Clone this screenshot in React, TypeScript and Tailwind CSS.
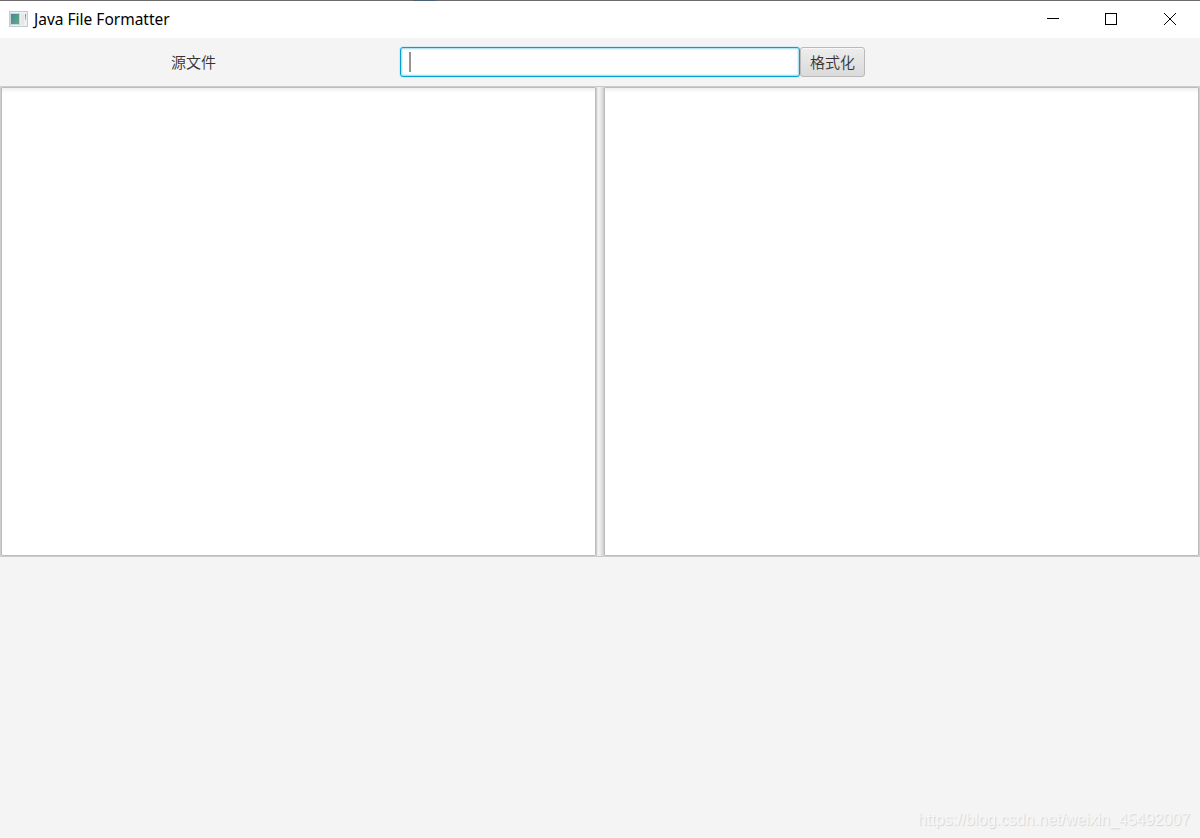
function AppIcon() {
  return (
    <svg width="19" height="16" viewBox="0 0 19 16" shapeRendering="crispEdges">
      <defs>
        <linearGradient id="screen" x1="0" y1="0" x2="1" y2="1">
          <stop offset="0" stopColor="#4a83a0" />
          <stop offset="1" stopColor="#5fb07c" />
        </linearGradient>
        <linearGradient id="strip" x1="0" y1="0" x2="0" y2="1">
          <stop offset="0" stopColor="#4b8f9c" />
          <stop offset="1" stopColor="#a5cdb4" />
        </linearGradient>
      </defs>
      <rect x="0" y="0" width="19" height="16" fill="#c6c9cd" />
      <rect x="1" y="1" width="17" height="14" fill="#eff0f2" />
      <rect x="1" y="2" width="10" height="12" fill="#c9d5da" />
      <rect x="2" y="3" width="8" height="10" fill="url(#screen)" />
      <rect x="12" y="3" width="3" height="11" fill="#e4e6ea" />
      <rect x="16" y="3" width="1" height="6" fill="url(#strip)" />
    </svg>
  );
}

function TitleBar() {
  return (
    <header className="flex h-[38px] flex-col bg-white">
      <div className="h-px shrink-0 bg-[#6b6b6b] pl-[413px]">
        <div className="h-px w-[23px] bg-[#4a6079]" />
      </div>
      <div className="flex items-start">
        <div className="flex items-center pl-[9px] pt-[7px]">
          <AppIcon />
          <h1 className="ml-[6px] whitespace-nowrap font-['Noto_Sans','Liberation_Sans',sans-serif] text-[15.5px] font-normal leading-[22px] text-black">
            Java File Formatter
          </h1>
        </div>
        <div className="ml-auto flex pr-[24px] pt-[12px]">
          <button aria-label="Minimize" className="mr-[46px]">
            <svg width="12" height="12" shapeRendering="crispEdges">
              <rect x="0" y="5" width="12" height="1" />
            </svg>
          </button>
          <button aria-label="Maximize" className="mr-[47px]">
            <svg width="12" height="12" fill="none" stroke="#000">
              <rect x="0.5" y="0.5" width="11" height="11" />
            </svg>
          </button>
          <button aria-label="Close">
            <svg width="12" height="12" stroke="#000" strokeWidth="1">
              <path d="M0 0L12 12M12 0L0 12" />
            </svg>
          </button>
        </div>
      </div>
    </header>
  );
}

function Editor() {
  return (
    <div className="min-w-0 flex-1 border border-[#cdcdcd]">
      <div className="h-full rounded-[1px] border border-[#bcbcbc] bg-white bg-linear-to-b from-[#f0f0f0] to-white to-[5px]" />
    </div>
  );
}

export default function App() {
  return (
    <div className="flex h-[838px] w-[1200px] flex-col overflow-hidden bg-[#f4f4f4] font-['Noto_Sans_CJK_SC',sans-serif] text-[15px] font-[350] text-[#333333]">
      <TitleBar />
      <div className="flex h-[48px] items-center">
        <label className="w-[400px] pl-[171px] leading-[20px]">源文件</label>
        <div className="flex h-[30px] w-[400px] items-center rounded-[3px] border border-[#039ed3] bg-white pl-[8px] shadow-[0_0_0_1px_#d5ecf4,inset_0_0_0_1px_#b5e1f1,inset_0_0_0_2px_#e3f4fa]">
          <div className="h-[20px] w-[2px] bg-[#949494]" />
        </div>
        <button className="h-[30px] w-[65px] rounded-[3px] border border-[#bababa] bg-linear-to-b from-[#ededed] to-[#dadada] leading-[20px] shadow-[inset_0_1px_0_#f8f8f8]">
          格式化
        </button>
      </div>
      <main className="flex h-[471px]">
        <Editor />
        <div className="w-[6px] border-y border-[#c8c8c8] bg-linear-to-r from-[#e4e4e4] via-[#f4f4f4] via-30% to-[#d8d8d8]" />
        <Editor />
      </main>
      <footer className="mt-auto flex justify-end pb-[7px] pr-[10px]">
        <span className="whitespace-nowrap font-['Liberation_Sans',sans-serif] text-[16px] font-normal leading-[22px] text-[#f7f7f7] [text-shadow:1px_1px_1px_#d4d4d4]">
          https://blog.csdn.net/weixin_45492007
        </span>
      </footer>
    </div>
  );
}
